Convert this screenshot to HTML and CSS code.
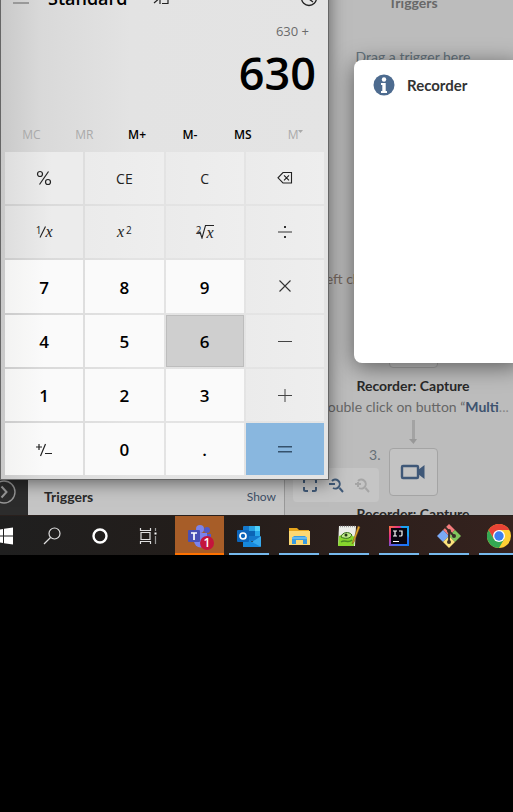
FILE: index.html
```html
<!DOCTYPE html>
<html lang="en">
<head>
<meta charset="utf-8">
<meta name="viewport" content="width=device-width, initial-scale=1">
<title>Desktop</title>
<link rel="stylesheet" href="styles.css">
</head>
<body>
<main class="desktop">
  <div class="studio">
    <aside class="rail">
      <button class="rail-toggle" aria-label="Expand"><svg width="24" height="24" viewBox="0 0 24 24" fill="none" stroke="#969696"><circle cx="12" cy="12" r="11" stroke-width="1.4"/><path d="M9.5 6.500l5 5.500-5 5.500" stroke-width="2"/></svg></button>
    </aside>
    <section class="panel">
      <h2 class="panel-title">Triggers</h2>
      <button class="panel-show">Show</button>
    </section>
    <section class="canvas">
      <h2 class="canvas-title">Triggers</h2>
      <p class="hint">Drag a trigger here</p>
      <p class="step-text first-text">Left click</p>
      <div class="node previous"></div>
      <h3 class="step-title">Recorder: Capture</h3>
      <p class="step-text">Double click on button “<b>Multi</b><span class="dots">...</span></p>
      <svg class="arrow" width="10" height="24" viewBox="0 0 10 24"><path d="M4 0h3v20H4z" fill="#a3a3a3"/><path d="M1 19h8l-3.500 5z" fill="#989898"/></svg>
      <div class="step-row">
        <span class="step-number">3.</span>
        <div class="node"><svg width="26" height="18" viewBox="0 0 26 18"><rect x="2" y="3" width="16" height="12" rx="1" fill="none" stroke="#3f5878" stroke-width="2.400"/><path d="M18 7l6.500-5v14L18 11z" fill="#3f5878"/></svg></div>
      </div>
      <h3 class="step-title">Recorder: Capture</h3>
    </section>
  </div>

  <div class="zoom-tools">
    <button aria-label="Fit to screen"><svg width="16" height="16" viewBox="0 0 16 16" fill="none" stroke="#405a78" stroke-width="2"><path d="M2 6V3.500Q2 2 3.500 2H6M10 2h2.500Q14 2 14 3.500V6M14 10v2.500Q14 14 12.500 14H10M6 14H3.500Q2 14 2 12.500V10"/></svg></button>
    <button aria-label="Zoom out"><svg width="16" height="16" viewBox="0 0 16 16" fill="none" stroke="#405a78" stroke-width="2"><path d="M4 4a4.500 4.500 0 1 1 1 7M11.500 11l3.500 4M1 7h6"/></svg></button>
    <button aria-label="Zoom in" disabled><svg width="16" height="16" viewBox="0 0 16 16" fill="none" stroke="#a5a5a5" stroke-width="2"><path d="M4 4a4.500 4.500 0 1 1 1 7M11.500 11l3.500 4M1 7h6M4 5v5"/></svg></button>
  </div>

  <section class="dialog" role="dialog" aria-labelledby="dialog-title">
    <svg width="22" height="22" viewBox="0 0 22 22"><circle cx="11" cy="11" r="10.500" fill="#4d6b8f"/><circle cx="11" cy="5.500" r="2.200" fill="#fff"/><path d="M8 9h4.700v8H14v2H8v-2h1.300v-6H8z" fill="#fff"/></svg>
    <h2 id="dialog-title">Recorder</h2>
  </section>

  <section class="calculator" aria-label="Calculator">
    <header class="calc-header">
      <button class="menu" aria-label="Menu"><svg width="16" height="14" viewBox="0 0 16 14"><path d="M0 1h16M0 6h16M0 12h16" stroke="#999" stroke-width="2"/></svg></button>
      <h1>Standard</h1>
      <button class="pin" aria-label="Keep on top"><svg width="16" height="16" viewBox="0 0 16 16" fill="none" stroke="#222" stroke-width="1.200"><path d="M7 2H15V13.500H9M1 13l7-6M3 8h4v6"/></svg></button>
      <button class="history" aria-label="History"><svg width="18" height="18" viewBox="0 0 18 18" fill="none" stroke="#222" stroke-width="1.300"><circle cx="9" cy="9" r="7.500"/><path d="M9 4v6l4 3"/></svg></button>
    </header>
    <p class="expression">630 +</p>
    <output class="result">630</output>
    <div class="memory">
      <button disabled>MC</button><button disabled>MR</button><button>M+</button><button>M-</button><button>MS</button><button class="memory-list" disabled>M<svg width="5" height="4" viewBox="0 0 5 4"><path d="M0 0h5L2.500 3z" fill="#aaa"/></svg></button>
    </div>
    <div class="keys">
      <button class="key" aria-label="Percent"><svg width="16" height="18" viewBox="0 0 16 18" fill="none" stroke="#222" stroke-width="1.200"><circle cx="4" cy="5" r="2.500"/><circle cx="12" cy="13" r="2.500"/><path d="M12.500 2.500l-9 13"/></svg></button>
      <button class="key">CE</button>
      <button class="key">C</button>
      <button class="key" aria-label="Backspace"><svg width="16" height="14" viewBox="0 0 16 14" fill="none" stroke="#222" stroke-width="1.100"><path d="M6 1.500h8.500v10.500H6L1 6.800zM7 4.300l5 5M12 4.300l-5 5"/></svg></button>
      <button class="key"><span class="math"><sup>1</sup><svg class="slash" width="7" height="14" viewBox="0 0 7 14" stroke="#222" stroke-width="1.100"><path d="M6.500 1.500L1 12.500"/></svg><i>x</i></span></button>
      <button class="key"><span class="math"><i>x</i><sup class="power">2</sup></span></button>
      <button class="key"><span class="math root"><sup>2</sup><svg width="8" height="14" viewBox="0 0 8 14" fill="none" stroke="#222" stroke-width="1.100"><path d="M0 8l2-1 2 6L7.500 .500H8"/></svg><i>x</i></span></button>
      <button class="key" aria-label="Divide"><svg width="14" height="14" viewBox="0 0 14 14" fill="#333"><path d="M0 6.500h14v1H0zM6 1h2v2H6zM6 11h2v2H6z"/></svg></button>
      <button class="key number">7</button><button class="key number">8</button><button class="key number">9</button>
      <button class="key" aria-label="Multiply"><svg width="14" height="14" viewBox="0 0 14 14" stroke="#333" stroke-width="1.100"><path d="M1.500 1.500l11 11M12.500 1.500l-11 11"/></svg></button>
      <button class="key number">4</button><button class="key number">5</button><button class="key number pressed">6</button>
      <button class="key" aria-label="Minus"><svg width="14" height="14" viewBox="0 0 14 14" fill="#444"><path d="M0 7h14v1H0z"/></svg></button>
      <button class="key number">1</button><button class="key number">2</button><button class="key number">3</button>
      <button class="key" aria-label="Plus"><svg width="14" height="14" viewBox="0 0 14 14" fill="#444"><path d="M0 7h14v1H0zM6.500 1h1v13h-1z"/></svg></button>
      <button class="key number" aria-label="Change sign"><svg width="18" height="16" viewBox="0 0 18 16" fill="none" stroke="#222" stroke-width="1.200"><path d="M1 5h6M4 2v6M10.500 2l-5 12M10 11.500h7"/></svg></button>
      <button class="key number">0</button><button class="key number">.</button>
      <button class="key equals" aria-label="Equals"><svg width="14" height="14" viewBox="0 0 14 14" fill="#34516c"><path d="M0 4h14v1.500H0zM0 9h14v1.500H0z"/></svg></button>
    </div>
  </section>
</main>

<nav class="taskbar" aria-label="Taskbar">
  <button class="tool" aria-label="Start"><svg width="17" height="18" viewBox="0 0 17 18" fill="#fff"><path d="M0 3l7-1v6.500H0zM8 1.700L17 .500v8H8zM0 9.500h7V16l-7-1zM8 9.500h9v8l-9-1.200z"/></svg></button>
  <button class="tool" aria-label="Search"><svg width="18" height="18" viewBox="0 0 18 18" fill="none" stroke="#ddd" stroke-width="1.200"><circle cx="11.500" cy="6.500" r="5.500"/><path d="M7.500 10.500L1 17"/></svg></button>
  <button class="tool" aria-label="Cortana"><svg width="18" height="18" viewBox="0 0 18 18" fill="none"><circle cx="9" cy="9" r="6.500" stroke="#fff" stroke-width="2.400"/></svg></button>
  <button class="tool" aria-label="Task view"><svg width="18" height="18" viewBox="0 0 18 18" fill="none" stroke="#e0e0e0" stroke-width="1.200"><path d="M1.500 1v2.500h10V1M1.500 17v-2.500h10V17M2 5.500h9v7H2z"/><path d="M16.500 1v3M16.500 9v8" stroke="#999"/><path d="M15.500 5.500h2v2h-2z" fill="#fff" stroke="none"/></svg></button>
  <button class="app active" aria-label="Teams">
    <svg width="26" height="26" viewBox="0 0 26 26"><circle cx="20" cy="7" r="3" fill="#5059c9"/><path d="M17 11h7v7a4 4 0 0 1-7 2z" fill="#5059c9"/><circle cx="13" cy="6" r="4" fill="#7b83eb"/><path d="M7 10h13v8a6.500 6.500 0 0 1-13 0z" fill="#7b83eb"/><rect x="1" y="7" width="12" height="12" rx="1" fill="#4950b4"/><path d="M4 10h6M7 10v7" stroke="#fff" stroke-width="1.700"/></svg>
    <span class="badge">1</span>
  </button>
  <button class="app" aria-label="Outlook"><svg width="24" height="24" viewBox="0 0 24 24"><rect x="6" y="2" width="17" height="15" rx="1" fill="#1478cb"/><path d="M12 2h6v5h-6z" fill="#28a1e3"/><path d="M18 2h4a1 1 0 0 1 1 1v4h-5z" fill="#4fd0fa"/><path d="M12 7h6v5h-6z" fill="#0b64b5"/><path d="M18 7h5v5h-5z" fill="#28a8ea"/><path d="M6 13l9 5 9-6v10a1 1 0 0 1-1 1H6z" fill="#37a9ed"/><path d="M6 13l18 10H6z" fill="#1688dc"/><rect x="0" y="6" width="12" height="12" rx="1" fill="#0c65bb"/><circle cx="6" cy="12" r="3" fill="none" stroke="#fff" stroke-width="1.700"/></svg></button>
  <button class="app" aria-label="File Explorer"><svg width="24" height="22" viewBox="0 0 24 22"><path d="M2 3h8l2 2h10v4H2z" fill="#e6a51d"/><path d="M2 6h21v14H2z" fill="#fcd873"/><path d="M5 19v-6l2-2h11l2 2v6h-4v-4H9v4z" fill="#379be1"/><path d="M5 12h15v2H5z" fill="#63b8ef"/></svg></button>
  <button class="app" aria-label="Notepad++"><svg width="24" height="24" viewBox="0 0 24 24"><path d="M2 2h17l-1 20H1z" fill="#eceee8"/><path d="M2 12c6-3 11-2 16 1l-1 9H1z" fill="#87d62d"/><path d="M3 2.500h15" stroke="#999" stroke-width="1.500" stroke-dasharray="1 1"/><path d="M4 13c1-5 8-6 11-2-2 4-7 4-11 2z" fill="#bfe989" stroke="#376c1d"/><path d="M4 18c4-3 7 2 11-2" fill="none" stroke="#4b8a22" stroke-width="1.500"/><circle cx="9" cy="11" r="1.500" fill="#273d19"/><path d="M21 2l-5 15-1 3 2-2 6-15z" fill="#e6aa28" stroke="#795326" stroke-width=".500"/></svg></button>
  <button class="app" aria-label="IntelliJ IDEA"><svg width="22" height="22" viewBox="0 0 22 22"><defs><linearGradient id="idea" x1="0" y1="0" x2="1" y2="1"><stop offset="0" stop-color="#fc7540"/><stop offset=".300" stop-color="#e22d8a"/><stop offset=".600" stop-color="#4b65ed"/><stop offset="1" stop-color="#087cfa"/></linearGradient></defs><path d="M1 1h20v20H1z" fill="url(#idea)"/><path d="M12 1h9v12z" fill="#18a2f3"/><path d="M3 3h16v16H3z" fill="#080510"/><path d="M5 6h4M7 6v5M5 11h4M11 6h3v4q0 1-1 1h-2M5 16.500h6" fill="none" stroke="#fff" stroke-width="1.200"/></svg></button>
  <button class="app" aria-label="Git"><svg width="26" height="26" viewBox="0 0 26 26"><path d="M13 1l6 6-6 6-6-6z" fill="#f47c7c"/><path d="M7 7l6 6-6 6-6-6z" fill="#7ba9f5"/><path d="M19 7l6 6-6 6-6-6z" fill="#80c55d"/><path d="M13 13l6 6-6 6-6-6z" fill="#fbe17b"/><path d="M9 4l4 4v11M13 8l5 5" fill="none" stroke="#382d27" stroke-width="1.800"/><circle cx="13" cy="8" r="2" fill="#382d27"/><circle cx="18" cy="13" r="2" fill="#382d27"/><circle cx="13" cy="19" r="2" fill="#382d27"/></svg></button>
  <button class="app" aria-label="Chrome"><svg width="24" height="24" viewBox="0 0 24 24"><circle cx="12" cy="12" r="12" fill="#ffcf35"/><path d="M1.600 6A12 12 0 0 1 22.400 6H12L6.800 15z" fill="#e84335"/><path d="M1.600 6A12 12 0 0 0 12 24l5.200-9H6.800z" fill="#34a853"/><circle cx="12" cy="12" r="6" fill="#fff"/><circle cx="12" cy="12" r="4.700" fill="#3c7ff0"/></svg></button>
</nav>
</body>
</html>
```
FILE: styles.css
```css
* { box-sizing: border-box; }
body { margin: 0; background: #000; overflow: hidden; font-family: "Open Sans", "Noto Sans", sans-serif; }
h1, h2, h3, p { margin: 0; font-weight: 600; }
button { display: flex; align-items: center; justify-content: center; margin: 0; padding: 0; border: 0; background: none; color: inherit; font: inherit; }
svg { display: block; flex: none; }

.desktop { position: relative; height: 515px; overflow: hidden; background: #bcbcbc; }
.studio { display: grid; grid-template-columns: 28px 257px 1fr; grid-template-rows: 100%; height: 100%; font-family: Lato, sans-serif; }
.rail { display: flex; align-items: flex-end; justify-content: flex-end; padding: 0 12px 11px 0; background: #2c2c2c; }
.panel { display: flex; align-items: flex-end; justify-content: space-between; padding: 0 8px 8px 16px; border-right: 1px solid #999; background: #c5c5c5; }
.panel-title { font-size: 14px; line-height: 20px; font-weight: 700; color: #292929; }
.panel-show { font-size: 12px; line-height: 20px; color: #3e4f65; }

.canvas { display: flex; flex-direction: column; align-items: center; padding-left: 28px; white-space: nowrap; min-width: 0; }
.canvas > * { flex: none; }
.canvas-title { margin: -7px 0 34px; font-size: 14px; line-height: 20px; color: #686868; font-weight: 700; }
.hint { font-size: 14px; line-height: 20px; font-weight: 400; color: #62717b; }
.step-text { font-size: 14px; line-height: 22px; font-weight: 400; color: #666; }
.step-text b { color: #3e536f; }
.dots { color: #888; }
.first-text { align-self: flex-start; margin: 201px 0 30px 6px; color: #776960; }
.node { display: flex; align-items: center; justify-content: center; width: 49px; height: 48px; flex: none; border: 1px solid #a4a4a4; border-radius: 4px; background: #c3c3c3; }
.step-title { margin-top: 8px; font-size: 14px; line-height: 20px; font-weight: 700; color: #292929; }
.arrow { margin: 2px 0 4px; }
.step-row { display: grid; grid-template-columns: 20px 49px 20px; column-gap: 8px; }
.step-number { text-align: right; font-size: 14px; line-height: 14px; color: #666f76; }

.zoom-tools { position: absolute; left: 293px; bottom: 13px; display: flex; gap: 10px; padding: 9px; border-radius: 4px; background: #c5c5c5; }

.dialog { position: absolute; left: 354px; right: -8px; top: 60px; height: 303px; display: flex; align-items: flex-start; gap: 12px; padding: 14px 19px; border-radius: 8px; background: #fff; box-shadow: 0 4px 22px rgba(0, 0, 0, .5); }
.dialog h2 { font: 700 15px/22px Lato, sans-serif; color: #333; }

.calculator { position: absolute; left: 0; top: -20px; width: 329px; display: flex; flex-direction: column; padding: 0 4px 4px; border: 1px solid #666; border-top: 0; background: linear-gradient(90deg, #c9c9c9 0, #d9d9d9 40px, #e3e3e3 130px, #e4e4e4); box-shadow: 0 3px 16px rgba(0, 0, 0, .5); color: #000; }
.calc-header { display: flex; align-items: center; height: 36px; padding: 0 6px 0 8px; }
.calc-header h1 { margin: 0 25px 0 19px; font-size: 18px; line-height: 24px; }
.history { margin-left: auto; }
.expression { align-self: flex-end; margin: 5px 15px 0 0; font-size: 13px; line-height: 20px; font-weight: 400; color: #6b6b6b; }
.result { align-self: flex-end; margin-right: 8px; font-size: 45px; line-height: 64px; font-weight: 600; }
.memory { display: grid; grid-template-columns: repeat(6, 1fr); height: 36px; margin: 11px 2px 0 0; font-size: 12px; font-weight: 600; }
.memory button:disabled { color: #aaa; font-weight: 400; }
.memory-list svg { align-self: flex-start; margin-top: 14px; }
.keys { display: grid; grid-template-columns: repeat(4, 1fr); grid-template-rows: repeat(6, 1fr); gap: 2px; height: 323px; }
.key { background: linear-gradient(90deg, #ebebeb, #eee); font-size: 14px; color: #222; }
.key:nth-child(4n + 1) { background: linear-gradient(90deg, #dedede, #ececec 60%); }
.key.number { padding-top: 2px; background: #fafafa; font-size: 17px; font-weight: 600; color: #000; }
.key.number:nth-child(4n + 1) { background: linear-gradient(90deg, #f3f3f2, #fafafa 50%); }
.key.pressed { border: 1px solid #bdbdbd; background: #cfcfcf; }
.key.equals { background: #89b7df; }
.key i { font-family: "Liberation Serif", serif; font-size: 16px; line-height: 14px; }
.key sup { font-size: 10px; line-height: 10px; }
.math { display: flex; align-items: center; }
.math sup { align-self: flex-start; }
.slash { margin: 0 -1px 0 -2px; }
.power { margin-left: 2px; }
.root sup { margin-right: -3px; }
.math.root i { border-top: 1px solid #222; line-height: 13px; }

.taskbar { display: flex; height: 40px; overflow: hidden; background: linear-gradient(90deg, #1f1f1f, #231d1a 40%, #35221e); border-top: 1px solid #29201d; }
.tool { flex: 0 0 48px; }
.tool:first-child { margin-left: -20px; }
.app { position: relative; flex: 0 0 50px; }
.app::after { content: ""; position: absolute; bottom: 0; left: 5px; right: 5px; height: 2px; background: #76b9ed; }
.app.active { flex-basis: 49px; margin-left: 3px; background: #a75d28; }
.app.active::after { left: 0; right: 0; background: #ff7200; }
.badge { position: absolute; left: 25px; top: 20px; width: 14px; height: 14px; border-radius: 50%; background: #c4143c; color: #fff; font-size: 12px; line-height: 14px; font-weight: 600; text-align: center; }
```
